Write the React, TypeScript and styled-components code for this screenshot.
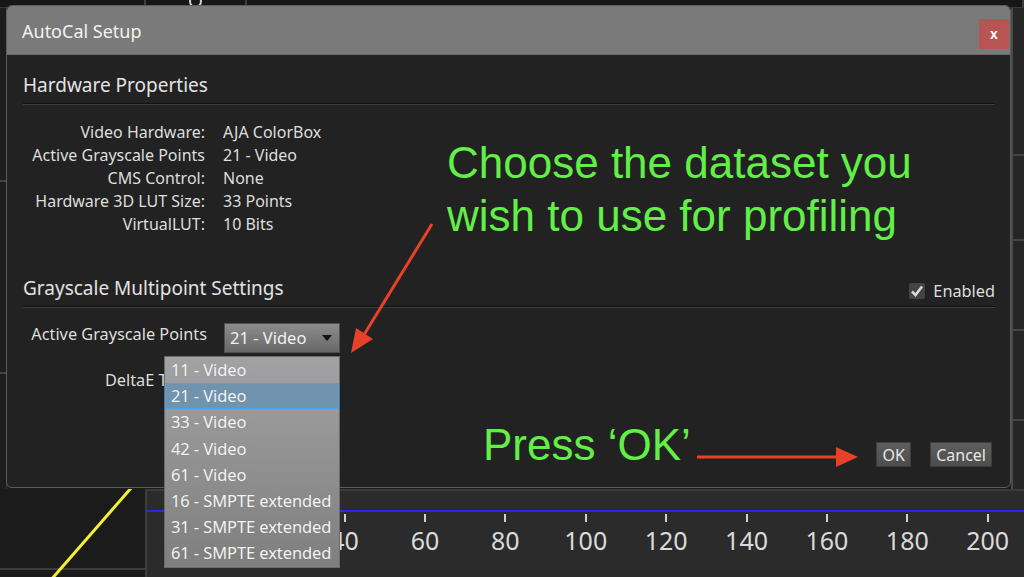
import { Fragment } from "react";
import styled, { createGlobalStyle } from "styled-components";

const Global = createGlobalStyle`
  html, body {
    margin: 0;
    padding: 0;
    background: #1d1d1d;
  }
  body {
    font-family: "Noto Sans", "Liberation Sans", sans-serif;
  }
`;

const Page = styled.div`
  position: relative;
  width: 1024px;
  height: 577px;
  overflow: hidden;
  background: #1d1d1d;
  display: flex;
  flex-direction: column;
`;

/* ---------- background application ---------- */

const TopStrip = styled.div`
  height: 7px;
  display: flex;
  background: #171717;
  border-bottom: 1px solid #3a3a3a;
`;

const TopCell = styled.div<{ $w?: number }>`
  width: ${(p) => (p.$w ? `${p.$w}px` : "auto")};
  flex: ${(p) => (p.$w ? "none" : "1")};
  border-right: 2px solid #3c3c3c;
  overflow: hidden;
  box-sizing: border-box;
  display: flex;
  justify-content: center;
`;

const Knob = styled.span`
  width: 9px;
  height: 9px;
  margin-top: -5px;
  border: 2px solid #cfcfcf;
  border-radius: 50%;
`;

const Middle = styled.div`
  flex: 1;
  display: flex;
`;

const LeftRail = styled.div`
  width: 6px;
  display: flex;
  flex-direction: column;
  border-right: 1px solid #3a3a3a;
`;

const RailPanel = styled.div<{ $h: number }>`
  height: ${(p) => p.$h}px;
  border-bottom: 2px solid #444;
  flex: none;
`;

const Center = styled.div`
  flex: 1;
`;

const RightRail = styled.div`
  width: 11px;
  display: flex;
  flex-direction: column;
  background: #262626;
  border-left: 2px solid #4a4a4a;
`;

const BottomRow = styled.div`
  height: 88px;
  display: flex;
`;

const PlotThumb = styled.div`
  width: 145px;
  border-right: 2px solid #3d3d3d;
  background: #1b1b1b;
  display: flex;
`;

const Chart = styled.div`
  flex: 1;
  background: #2b2b2b;
  border-top: 2px solid #3b3b3b;
  display: flex;
  flex-direction: column;
`;

const PlotLine = styled.div`
  height: 2px;
  margin-top: 19px;
  background: #2424ff;
`;

const Axis = styled.div`
  display: flex;
  padding-left: 77px;
`;

const AxisCell = styled.div`
  width: 80.4px;
  flex: none;
  display: flex;
  flex-direction: column;
  align-items: center;
  color: #dadada;
  font-family: "Noto Sans", sans-serif;
  font-size: 25px;
  line-height: 30px;
`;

const Tick = styled.div`
  width: 2px;
  height: 8px;
  margin-top: 2px;
  margin-bottom: 3px;
  background: #d0d0d0;
`;

/* ---------- dialog ---------- */

const Dialog = styled.div`
  position: absolute;
  left: 6px;
  top: 5px;
  width: 1005px;
  height: 483px;
  box-sizing: border-box;
  border: 1px solid #5c5c5c;
  border-radius: 6px;
  background: #222222;
  display: flex;
  flex-direction: column;
  color: #dedede;
`;

const TitleBar = styled.div`
  height: 48px;
  flex: none;
  background: #7a7a7a;
  border-radius: 5px 5px 0 0;
  border-bottom: 1px solid #6a6a6a;
  display: flex;
  justify-content: space-between;
  padding: 0 1px 0 15px;
`;

const Title = styled.div`
  font-size: 18px;
  line-height: 50px;
  color: #f2f2f2;
`;

const CloseButton = styled.button`
  align-self: flex-end;
  margin-bottom: 5px;
  width: 30px;
  height: 30px;
  border: none;
  padding: 0;
  background: #b85552;
  color: #ffffff;
  font-family: "Liberation Sans", sans-serif;
  font-weight: bold;
  font-size: 14px;
  line-height: 28px;
`;

const Body = styled.div`
  flex: 1;
  display: flex;
  flex-direction: column;
  padding: 18px 15px 20px 16px;
  position: relative;
`;

const SectionHead = styled.div<{ $gap?: number }>`
  display: flex;
  justify-content: space-between;
  align-items: flex-end;
  margin-top: ${(p) => p.$gap ?? 0}px;
  padding-bottom: 6px;
  border-bottom: 1px solid #121212;
  box-shadow: 0 1px 0 #3e3e3e;
`;

const Heading = styled.div`
  font-size: 19px;
  line-height: 24px;
  color: #e2e2e2;
`;

const PropGrid = styled.div`
  display: grid;
  grid-template-columns: 182px auto;
  column-gap: 18px;
  grid-auto-rows: 23px;
  margin-top: 17px;
  font-size: 16px;
  line-height: 23px;
`;

const PropLabel = styled.div`
  text-align: right;
  white-space: nowrap;
`;

const PropValue = styled.div`
  white-space: nowrap;
`;

const CheckRow = styled.label`
  display: flex;
  align-items: center;
  gap: 8px;
  font-size: 16.3px;
  line-height: 20px;
  margin-bottom: -1px;
`;

const CheckBox = styled.span`
  width: 16px;
  height: 16px;
  background: #444;
  border-radius: 2px;
  display: flex;
  align-items: center;
  justify-content: center;
`;

const SettingsGrid = styled.div`
  display: grid;
  grid-template-columns: 184px auto;
  column-gap: 17px;
  row-gap: 16px;
  grid-auto-rows: minmax(22px, auto);
  margin-top: 16px;
  font-size: 16.3px;
  line-height: 22px;
`;

const SettingLabel = styled.div`
  text-align: right;
  white-space: nowrap;
`;

const SelectWrap = styled.div`
  position: relative;
  width: 116px;
`;

const SelectBox = styled.div`
  height: 30px;
  box-sizing: border-box;
  border: 1px solid #4f4f4f;
  background: linear-gradient(#8c8c8c, #686868);
  display: flex;
  align-items: center;
  justify-content: space-between;
  padding: 0 7px 0 5px;
  font-size: 16.5px;
  color: #f0f0f0;
`;

const Caret = styled.span`
  width: 0;
  height: 0;
  border-left: 5px solid transparent;
  border-right: 5px solid transparent;
  border-top: 6px solid #111;
`;

const DropList = styled.ul`
  position: absolute;
  right: 0;
  top: calc(100% + 3px);
  width: 176px;
  margin: 0;
  padding: 0;
  list-style: none;
  box-sizing: border-box;
  border: 1px solid #6a6a6a;
  background: linear-gradient(#a2a2a2, #7f7f7f);
  z-index: 5;
`;

const DropItem = styled.li<{ $active?: boolean }>`
  height: 26.2px;
  box-sizing: border-box;
  padding-left: 6px;
  font-size: 16.5px;
  line-height: 25px;
  color: #f4f4f4;
  text-shadow: 0 0 1px rgba(0, 0, 0, 0.15);
  white-space: nowrap;
  letter-spacing: -0.1px;
  background: ${(p) => (p.$active ? "#7094ad" : "transparent")};
  box-shadow: ${(p) => (p.$active ? "inset 0 0 0 1px #4aa5ee" : "none")};
`;

const ButtonRow = styled.div`
  margin-top: auto;
  display: flex;
  justify-content: flex-end;
  gap: 19px;
  padding-right: 3px;
`;

const DialogButton = styled.button`
  height: 25px;
  padding: 0 5px;
  min-width: 35px;
  border: 1px solid #3c3c3c;
  background: linear-gradient(#5e5e5e, #4d4d4d);
  color: #e8e8e8;
  font-family: "Noto Sans", sans-serif;
  font-size: 16px;
  line-height: 22px;
`;

/* ---------- annotations ---------- */

const Note = styled.div<{ $x: number; $y: number }>`
  position: absolute;
  left: ${(p) => p.$x}px;
  top: ${(p) => p.$y}px;
  font-family: "Liberation Sans", Arial, sans-serif;
  font-size: 44px;
  line-height: 53px;
  color: #63ee48;
  white-space: nowrap;
  z-index: 6;
`;

const ArrowLayer = styled.svg`
  position: absolute;
  left: 0;
  top: 0;
  z-index: 6;
  pointer-events: none;
`;

const properties: [string, string][] = [
  ["Video Hardware:", "AJA ColorBox"],
  ["Active Grayscale Points", "21 - Video"],
  ["CMS Control:", "None"],
  ["Hardware 3D LUT Size:", "33 Points"],
  ["VirtualLUT:", "10 Bits"],
];

const datasets = [
  "11 - Video",
  "21 - Video",
  "33 - Video",
  "42 - Video",
  "61 - Video",
  "16 - SMPTE extended",
  "31 - SMPTE extended",
  "61 - SMPTE extended",
];

const axisValues = [20, 40, 60, 80, 100, 120, 140, 160, 180, 200];

export default function App() {
  const selected = "21 - Video";

  return (
    <Page>
      <Global />
      <TopStrip>
        <TopCell $w={146} />
        <TopCell $w={101}>
          <Knob />
        </TopCell>
        <TopCell />
      </TopStrip>
      <Middle>
        <LeftRail>
          <RailPanel $h={172} />
          <RailPanel $h={190} />
        </LeftRail>
        <Center />
        <RightRail>
          <RailPanel $h={146} />
          <RailPanel $h={83} />
          <RailPanel $h={88} />
          <RailPanel $h={88} />
        </RightRail>
      </Middle>
      <BottomRow>
        <PlotThumb>
          <svg width="145" height="88" viewBox="0 0 145 88">
            <line x1="0" y1="80" x2="145" y2="80" stroke="#3d3d3d" strokeWidth="2" />
            <line x1="132" y1="-2" x2="50" y2="92" stroke="#f2f03a" strokeWidth="3" />
          </svg>
        </PlotThumb>
        <Chart>
          <PlotLine />
          <Axis>
            {axisValues.map((v) => (
              <AxisCell key={v}>
                <Tick />
                {v}
              </AxisCell>
            ))}
          </Axis>
        </Chart>
      </BottomRow>

      <Dialog>
        <TitleBar>
          <Title>AutoCal Setup</Title>
          <CloseButton>x</CloseButton>
        </TitleBar>
        <Body>
          <SectionHead>
            <Heading>Hardware Properties</Heading>
          </SectionHead>
          <PropGrid>
            {properties.map(([label, value]) => (
              <Fragment key={label}>
                <PropLabel>{label}</PropLabel>
                <PropValue>{value}</PropValue>
              </Fragment>
            ))}
          </PropGrid>

          <SectionHead $gap={40}>
            <Heading>Grayscale Multipoint Settings</Heading>
            <CheckRow>
              <CheckBox>
                <svg width="14" height="14" viewBox="0 0 14 14">
                  <path d="M2 7.5 L5.5 11 L12 2.5" fill="none" stroke="#d8d8d8" strokeWidth="2.6" />
                </svg>
              </CheckBox>
              Enabled
            </CheckRow>
          </SectionHead>
          <SettingsGrid>
            <SettingLabel>Active Grayscale Points</SettingLabel>
            <SelectWrap>
              <SelectBox>
                {selected}
                <Caret />
              </SelectBox>
              <DropList>
                {datasets.map((d) => (
                  <DropItem key={d} $active={d === selected}>
                    {d}
                  </DropItem>
                ))}
              </DropList>
            </SelectWrap>
            <SettingLabel>DeltaE Target</SettingLabel>
            <div />
          </SettingsGrid>

          <ButtonRow>
            <DialogButton>OK</DialogButton>
            <DialogButton>Cancel</DialogButton>
          </ButtonRow>
        </Body>
      </Dialog>

      <Note $x={447} $y={136}>
        Choose the dataset you
        <br />
        wish to use for profiling
      </Note>
      <Note $x={483} $y={418}>
        Press ‘OK’
      </Note>

      <ArrowLayer width="1024" height="577" viewBox="0 0 1024 577">
        <line x1="432" y1="224" x2="362" y2="338" stroke="#e8412a" strokeWidth="3" />
        <polygon points="351,353 356,328 373,339" fill="#e8412a" />
        <line x1="697" y1="457" x2="840" y2="457" stroke="#e8412a" strokeWidth="3" />
        <polygon points="858,457 836,447 836,467" fill="#e8412a" />
      </ArrowLayer>
    </Page>
  );
}
